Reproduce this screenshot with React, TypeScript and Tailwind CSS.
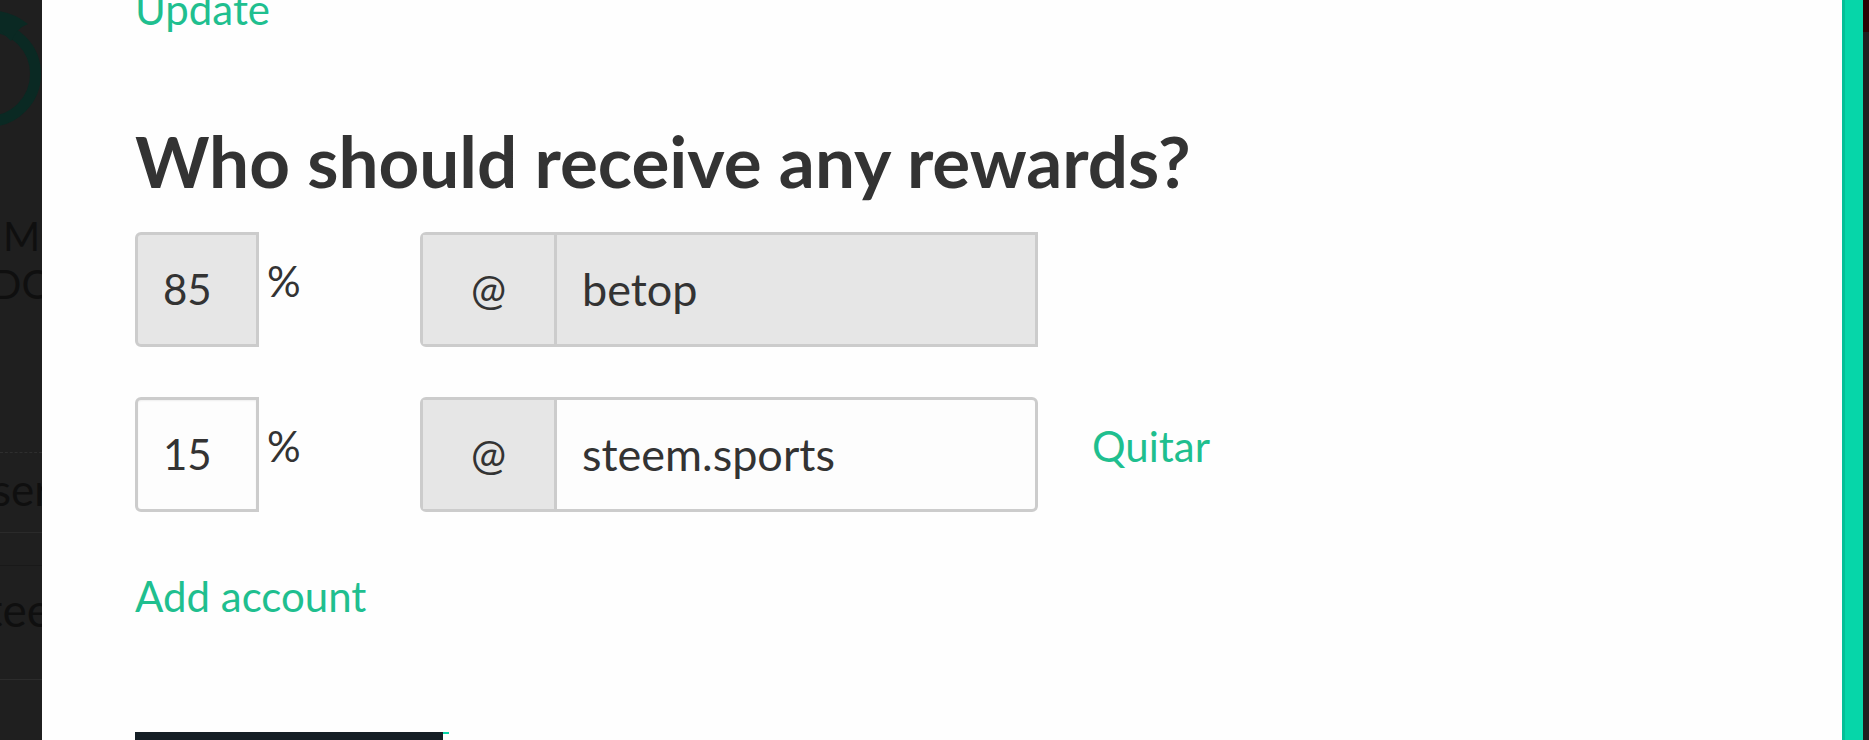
const green = 'text-[#1fbf8f]'

function Sidebar() {
    return (
        <div className="w-[42px] shrink-0 overflow-hidden bg-[#1f1f1f] font-[Lato,sans-serif] text-[#0f0f0f]">
            <svg width="42" height="130" viewBox="0 0 42 130" className="block">
                <circle cx="-12" cy="74" r="47.5" fill="none" stroke="#0a2923" strokeWidth="11" />
                <path d="M-2 11 Q 14 13 28 24 Q 17 28 11 41 L 0 30 Z" fill="#0a2923" />
            </svg>
            <div className="mt-[82px] whitespace-nowrap pl-[3px] text-[40px] leading-[48px]">MC</div>
            <div className="ml-[-9px] whitespace-nowrap text-[40px] leading-[48px]">DQr</div>
            <div className="mt-[144px] border-t border-dashed border-[#2e2e2e]" />
            <div className="mt-[14px] ml-[-8px] whitespace-nowrap text-[44px] leading-[44px]">sert</div>
            <div className="mt-[21px] border-t border-[#2a2a2a]" />
            <div className="mt-[32px] border-t border-[#191919]" />
            <div className="mt-[21px] ml-[-14px] whitespace-nowrap text-[46px] leading-[46px]">teee</div>
            <div className="mt-[46px] border-t border-[#2c2c2c]" />
        </div>
    )
}

function Row({ pct, name, disabled }: { pct: string; name: string; disabled?: boolean }) {
    return (
        <div className="flex h-[115px] items-start">
            <div
                className={
                    'flex h-[115px] w-[124px] items-center rounded-l-[6px] border-[3px] border-[#cccccc] pl-[25px] ' +
                    (disabled ? 'bg-[#e6e6e6]' : 'bg-[#fdfdfd] shadow-[inset_0_1px_2px_rgba(0,0,0,0.06)]')
                }
            >
                {pct}
            </div>
            <div className="w-[161px] pt-[24px] pl-[8px] leading-[50px]">%</div>
            <div
                className={
                    'flex h-[115px] w-[618px] rounded-l-[6px] border-[3px] border-[#cccccc] ' +
                    (disabled ? 'bg-[#e6e6e6]' : 'rounded-r-[6px] bg-[#fdfdfd]')
                }
            >
                <div className="flex w-[134px] items-center justify-center border-r-[3px] border-[#cccccc] bg-[#e6e6e6]">
                    @
                </div>
                <div className="flex flex-1 items-center pl-[25px] text-[45px]">{name}</div>
            </div>
            {!disabled && <div className={'ml-[54px] pt-[24px] leading-[50px] ' + green}>Quitar</div>}
        </div>
    )
}

export default function App() {
    return (
        <div className="flex h-[740px] w-full overflow-hidden bg-[#1f1f1f]">
            <Sidebar />
            <div className="flex-1 overflow-hidden bg-[#fefefe] pl-[93px] font-[Lato,sans-serif] text-[42px] text-[#333333]">
                <div className={'mt-[-16px] leading-[50px] ' + green}>Update</div>
                <h2 className="mt-[87px] text-[71px] leading-[80px] font-bold">Who should receive any rewards?</h2>
                <div className="mt-[31px] flex flex-col gap-[50px]">
                    <Row pct="85" name="betop" disabled />
                    <Row pct="15" name="steem.sports" />
                </div>
                <div className={'mt-[59px] leading-[50px] ' + green}>Add account</div>
                <div className="mt-[111px] flex items-end">
                    <div className="h-[60px] w-[308px] bg-[#151e25]" />
                    <div className="mb-[58px] h-[2px] w-[6px] bg-[#06d6a9]" />
                </div>
            </div>
            <div className="w-[21px] shrink-0 border-l-[3px] border-[#05bf97] bg-[#06d6a9]" />
            <div className="flex w-[6px] shrink-0 flex-col bg-[#1f1f1f]">
                <div className="h-[32px] bg-[#2a0404]" />
            </div>
        </div>
    )
}
